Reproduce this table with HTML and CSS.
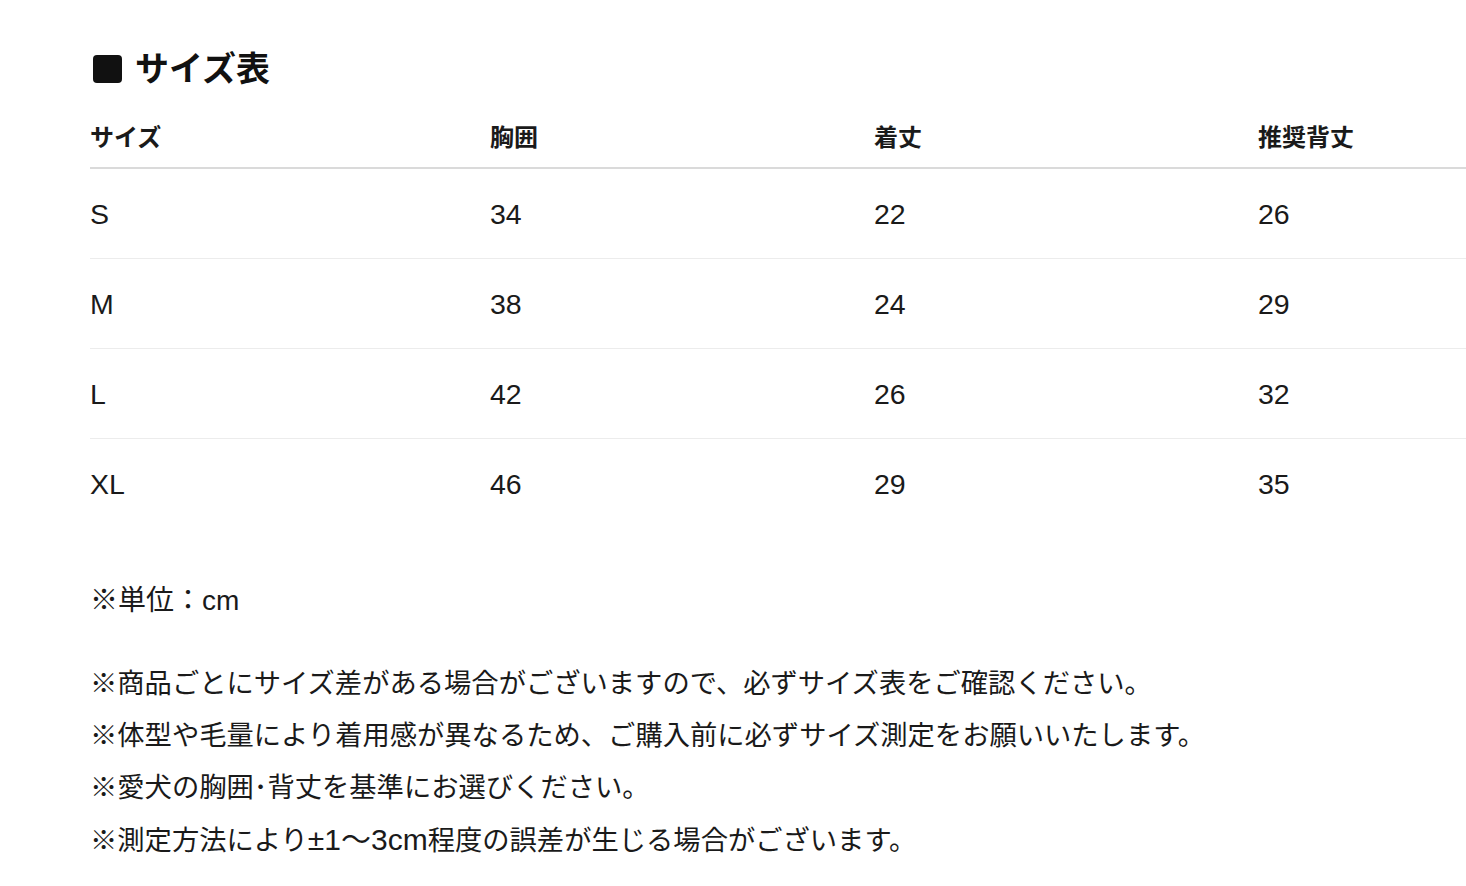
FILE: index.html
```html
<!DOCTYPE html>
<html lang="ja">
<head>
<meta charset="utf-8">
<link rel="stylesheet" href="styles.css">
</head>
<body>
<main class="page">
  <h2 class="title"><span class="title-mark"></span>サイズ表</h2>
  <table class="size-table">
    <thead>
      <tr><th class="c1">サイズ</th><th class="c2">胸囲</th><th class="c3">着丈</th><th class="c4">推奨背丈</th></tr>
    </thead>
    <tbody>
      <tr><td>S</td><td>34</td><td>22</td><td>26</td></tr>
      <tr><td>M</td><td>38</td><td>24</td><td>29</td></tr>
      <tr><td>L</td><td>42</td><td>26</td><td>32</td></tr>
      <tr><td>XL</td><td>46</td><td>29</td><td>35</td></tr>
    </tbody>
  </table>
  <p class="unit">※単位：cm</p>
  <ul class="notes">
    <li>※商品ごとにサイズ差がある場合がございますので、必ずサイズ表をご確認ください。</li>
    <li>※体型や毛量により着用感が異なるため、ご購入前に必ずサイズ測定をお願いいたします。</li>
    <li>※愛犬の胸囲･背丈を基準にお選びください。</li>
    <li>※測定方法により<span class="latin">±1～3cm</span>程度の誤差が生じる場合がございます。</li>
  </ul>
</main>
</body>
</html>
```

FILE: styles.css
```css
html, body {
  margin: 0;
  padding: 0;
  background: #fff;
}
body {
  font-family: "Liberation Sans", "Noto Sans CJK JP", sans-serif;
  color: #1a1a1a;
  overflow: hidden;
}
.page {
  padding: 49px 0 0 90px;
}
.title {
  display: flex;
  align-items: center;
  gap: 13px;
  margin: 0;
  height: 40px;
  font-size: 34px;
  font-weight: 700;
  line-height: 40px;
  color: #111;
}
.title-mark {
  width: 29px;
  height: 28px;
  margin-left: 3px;
  border-radius: 4px;
  background: #111;
}
.size-table {
  width: 1376px;
  margin-top: 14px;
  border-collapse: collapse;
  table-layout: fixed;
}
.size-table th {
  height: 64px;
  padding: 0;
  text-align: left;
  vertical-align: middle;
  font-size: 24px;
  font-weight: 700;
  color: #1a1a1a;
  border-bottom: 2px solid #dadada;
}
.size-table .c1 { width: 400px; }
.size-table .c2 { width: 384px; }
.size-table .c3 { width: 384px; }
.size-table td {
  height: 87px;
  padding: 2px 0 0;
  font-size: 28.5px;
  vertical-align: middle;
  border-bottom: 1px solid #ececec;
}
.size-table tbody tr:last-child td {
  border-bottom: none;
}
.unit {
  margin: 54px 0 0;
  font-size: 28px;
  line-height: 38px;
}
.notes {
  list-style: none;
  margin: 38px 0 0;
  padding: 0;
  font-size: 27.3px;
  line-height: 52px;
}
.latin {
  font-size: 30px;
}
```
